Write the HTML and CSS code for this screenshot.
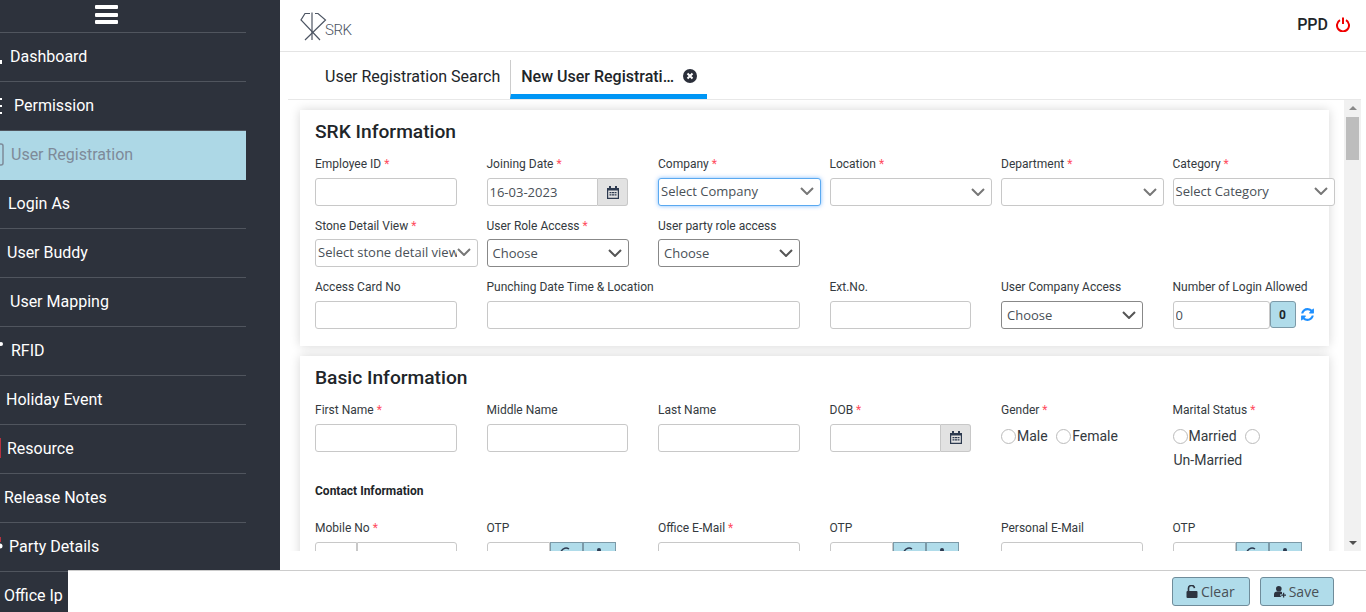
FILE: index.html

```html
<!DOCTYPE html>
<html lang="en">
<head>
    <meta charset="UTF-8">
    <title>SRK - New User Registration</title>
    <link rel="stylesheet" href="styles.css">
</head>
<body>

<div class="app">
    <!-- Side menu, scrolled a little to the left as in the app -->
    <aside class="sidebar">
        <div class="menu-toggle"><span></span><span></span><span></span></div>
        <ul class="menu">
            <li><svg class="menu-icon" width="10" height="48"><rect x="0" y="27" width="2" height="4" fill="#fff"/></svg>Dashboard</li>
            <li><svg class="menu-icon" width="14" height="48"><rect x="0" y="16" width="2" height="2" fill="#fff"/><rect x="0" y="23" width="2" height="2" fill="#fff"/><rect x="0" y="30" width="2" height="2" fill="#fff"/></svg>Permission</li>
            <li class="active"><svg class="menu-icon" width="11" height="48"><rect x="-4" y="13" width="7" height="21" rx="2" fill="none" stroke="#7e8a99" stroke-width="1.5"/></svg>User Registration</li>
            <li><svg class="menu-icon" width="8" height="48"></svg>Login As</li>
            <li><svg class="menu-icon" width="7" height="48"></svg>User Buddy</li>
            <li><svg class="menu-icon" width="10" height="48"></svg>User Mapping</li>
            <li><svg class="menu-icon" width="11" height="48"><circle cx="1" cy="17" r="2" fill="#fff"/></svg>RFID</li>
            <li><svg class="menu-icon" width="6" height="48"></svg>Holiday Event</li>
            <li><svg class="menu-icon" width="7" height="48"><rect x="0" y="13" width="1" height="20" fill="#b5303f"/></svg>Resource</li>
            <li><svg class="menu-icon" width="4" height="48"></svg>Release Notes</li>
            <li><svg class="menu-icon" width="9" height="48"><rect x="0" y="14" width="1" height="5" fill="#b5303f"/><circle cx="0" cy="23" r="2.5" fill="#fff"/></svg>Party Details</li>
            <li><svg class="menu-icon" width="4" height="48"></svg>Office Ip</li>
        </ul>
    </aside>

    <div class="main">
        <header class="topbar">
            <svg class="logo-mark" width="27" height="29" viewBox="0 0 27 29" fill="none" stroke="#4d5563" stroke-width="1.2">
                <path d="M10 1.5H5L1 8L20 28"/>
                <path d="M15 1.5H18L25.5 8L5 28"/>
                <path d="M12 0.5V28"/>
            </svg>
            <span class="logo-text">SRK</span>
            <div class="user-box">
                <span>PPD</span>
                <svg width="14" height="15" viewBox="0 0 14 15" fill="none" stroke="#f00000" stroke-width="2">
                    <path d="M4 3.2A6 6 0 1 0 10 3.2"/>
                    <path d="M7 0.5V7"/>
                </svg>
            </div>
        </header>

        <nav class="tabs">
            <div class="tab">User Registration Search</div>
            <div class="tab tab-active">
                <span class="tab-title">New User Registration</span>
                <svg width="14" height="14" viewBox="0 0 14 14">
                    <circle cx="7" cy="7" r="7" fill="#2b2f3a"/>
                    <path d="M4.5 4.5L9.5 9.5M9.5 4.5L4.5 9.5" stroke="#fff" stroke-width="2"/>
                </svg>
            </div>
        </nav>

        <div class="scroll-area">
            <div class="content">
                <!-- SRK Information -->
                <section class="card card-first">
                    <h2>SRK Information</h2>
                    <div class="form-grid">
                        <div class="field">
                            <label>Employee ID <em>*</em></label>
                            <input type="text" class="input">
                        </div>
                        <div class="field">
                            <label>Joining Date <em>*</em></label>
                            <div class="date-group">
                                <input type="text" class="input input-tight" value="16-03-2023">
                                <span class="date-btn">
                                    <svg width="12" height="13" viewBox="0 0 12 13"><path fill="#2d3a50" d="M2 0h2v2H8V0h2v2h2v11H0V2h2zM1.2 4.5v7.3h9.6V4.5zM2.5 6h2v1.3h-2zM5 6h2v1.3H5zM7.5 6h2v1.3h-2zM2.5 8.3h2v1.3h-2zM5 8.3h2v1.3H5zM7.5 8.3h2v1.3h-2z"/></svg>
                                </span>
                            </div>
                        </div>
                        <div class="field">
                            <label>Company <em>*</em></label>
                            <div class="select select-wide select-tight select-focus"><span>Select Company</span><svg width="14" height="8" viewBox="0 0 14 8"><path d="M1 1L7 7L13 1" fill="none" stroke="#777" stroke-width="2"/></svg></div>
                        </div>
                        <div class="field">
                            <label>Location <em>*</em></label>
                            <div class="select select-wide"><span></span><svg width="14" height="8" viewBox="0 0 14 8"><path d="M1 1L7 7L13 1" fill="none" stroke="#777" stroke-width="2"/></svg></div>
                        </div>
                        <div class="field">
                            <label>Department <em>*</em></label>
                            <div class="select select-wide"><span></span><svg width="14" height="8" viewBox="0 0 14 8"><path d="M1 1L7 7L13 1" fill="none" stroke="#777" stroke-width="2"/></svg></div>
                        </div>
                        <div class="field">
                            <label>Category <em>*</em></label>
                            <div class="select select-wide select-tight"><span>Select Category</span><svg width="14" height="8" viewBox="0 0 14 8"><path d="M1 1L7 7L13 1" fill="none" stroke="#777" stroke-width="2"/></svg></div>
                        </div>

                        <div class="field">
                            <label>Stone Detail View <em>*</em></label>
                            <div class="select select-wide select-tight select-clip"><span>Select stone detail view</span><svg width="14" height="8" viewBox="0 0 14 8"><path d="M1 1L7 7L13 1" fill="none" stroke="#777" stroke-width="2"/></svg></div>
                        </div>
                        <div class="field">
                            <label>User Role Access <em>*</em></label>
                            <div class="select select-dark"><span>Choose</span><svg width="14" height="8" viewBox="0 0 14 8"><path d="M1 1L7 7L13 1" fill="none" stroke="#555" stroke-width="2"/></svg></div>
                        </div>
                        <div class="field field-end">
                            <label>User party role access</label>
                            <div class="select select-dark"><span>Choose</span><svg width="14" height="8" viewBox="0 0 14 8"><path d="M1 1L7 7L13 1" fill="none" stroke="#555" stroke-width="2"/></svg></div>
                        </div>

                        <div class="field">
                            <label>Access Card No</label>
                            <input type="text" class="input">
                        </div>
                        <div class="field field-span2">
                            <label>Punching Date Time &amp; Location</label>
                            <input type="text" class="input">
                        </div>
                        <div class="field">
                            <label>Ext.No.</label>
                            <input type="text" class="input">
                        </div>
                        <div class="field">
                            <label>User Company Access</label>
                            <div class="select select-dark"><span>Choose</span><svg width="14" height="8" viewBox="0 0 14 8"><path d="M1 1L7 7L13 1" fill="none" stroke="#555" stroke-width="2"/></svg></div>
                        </div>
                        <div class="field">
                            <label>Number of Login Allowed</label>
                            <div class="login-group">
                                <input type="text" class="input input-tight" value="0">
                                <span class="count-btn">0</span>
                                <svg class="sync" width="15" height="15" viewBox="0 0 1792 1792"><path fill="#1e90ff" d="M1639 1056q0 5-1 7-64 268-268 434.5t-478 166.5q-146 0-282.5-55t-243.5-157l-129 129q-19 19-45 19t-45-19-19-45v-448q0-26 19-45t45-19h448q26 0 45 19t19 45-19 45l-137 137q71 66 161 102t187 36q134 0 250-65t186-179q11-17 53-117 8-23 30-23h192q13 0 22.5 9.5t9.5 22.5zm25-800v448q0 26-19 45t-45 19h-448q-26 0-45-19t-19-45 19-45l138-138q-148-137-349-137-134 0-250 65t-186 179q-11 17-53 117-8 23-30 23h-199q-13 0-22.5-9.5t-9.5-22.5v-7q65-268 270-434.5t480-166.5q146 0 284 55.5t245 156.5l130-129q19-19 45-19t45 19 19 45z"/></svg>
                            </div>
                        </div>
                    </div>
                </section>

                <!-- Basic Information -->
                <section class="card">
                    <h2>Basic Information</h2>
                    <div class="form-grid form-grid-basic">
                        <div class="field">
                            <label>First Name <em>*</em></label>
                            <input type="text" class="input">
                        </div>
                        <div class="field">
                            <label>Middle Name</label>
                            <input type="text" class="input">
                        </div>
                        <div class="field">
                            <label>Last Name</label>
                            <input type="text" class="input">
                        </div>
                        <div class="field">
                            <label>DOB <em>*</em></label>
                            <div class="date-group">
                                <input type="text" class="input input-tight">
                                <span class="date-btn">
                                    <svg width="12" height="13" viewBox="0 0 12 13"><path fill="#2d3a50" d="M2 0h2v2H8V0h2v2h2v11H0V2h2zM1.2 4.5v7.3h9.6V4.5zM2.5 6h2v1.3h-2zM5 6h2v1.3H5zM7.5 6h2v1.3h-2zM2.5 8.3h2v1.3h-2zM5 8.3h2v1.3H5zM7.5 8.3h2v1.3h-2z"/></svg>
                                </span>
                            </div>
                        </div>
                        <div class="field">
                            <label>Gender <em>*</em></label>
                            <div class="radios">
                                <input type="radio" name="gender">Male <input type="radio" name="gender">Female
                            </div>
                        </div>
                        <div class="field">
                            <label>Marital Status <em>*</em></label>
                            <div class="radios">
                                <input type="radio" name="marital">Married <input type="radio" name="marital"> <span class="radio-wrap">Un-Married</span>
                            </div>
                        </div>
                    </div>

                    <h4>Contact Information</h4>

                    <div class="form-grid">
                        <div class="field">
                            <label>Mobile No <em>*</em></label>
                            <div class="mobile-group">
                                <input type="text" class="input">
                                <input type="text" class="input">
                            </div>
                        </div>
                        <div class="field">
                            <label>OTP</label>
                            <div class="otp-group">
                                <input type="text" class="input">
                                <span class="otp-btn"><svg width="14" height="14" viewBox="0 0 14 14"><path d="M12 7A5 5 0 1 1 10 3" fill="none" stroke="#2d3a50" stroke-width="1.5"/></svg></span>
                                <span class="otp-btn"><svg width="14" height="14" viewBox="0 0 14 14"><circle cx="7" cy="4" r="2" fill="#2d3a50"/></svg></span>
                            </div>
                        </div>
                        <div class="field">
                            <label>Office E-Mail <em>*</em></label>
                            <input type="text" class="input">
                        </div>
                        <div class="field">
                            <label>OTP</label>
                            <div class="otp-group">
                                <input type="text" class="input">
                                <span class="otp-btn"><svg width="14" height="14" viewBox="0 0 14 14"><path d="M12 7A5 5 0 1 1 10 3" fill="none" stroke="#2d3a50" stroke-width="1.5"/></svg></span>
                                <span class="otp-btn"><svg width="14" height="14" viewBox="0 0 14 14"><circle cx="7" cy="4" r="2" fill="#2d3a50"/></svg></span>
                            </div>
                        </div>
                        <div class="field">
                            <label>Personal E-Mail</label>
                            <input type="text" class="input">
                        </div>
                        <div class="field">
                            <label>OTP</label>
                            <div class="otp-group">
                                <input type="text" class="input">
                                <span class="otp-btn"><svg width="14" height="14" viewBox="0 0 14 14"><path d="M12 7A5 5 0 1 1 10 3" fill="none" stroke="#2d3a50" stroke-width="1.5"/></svg></span>
                                <span class="otp-btn"><svg width="14" height="14" viewBox="0 0 14 14"><circle cx="7" cy="4" r="2" fill="#2d3a50"/></svg></span>
                            </div>
                        </div>
                    </div>
                </section>
            </div>

            <div class="scrollbar">
                <span class="arrow-up"></span>
                <span class="thumb"></span>
                <span class="arrow-down"></span>
            </div>
        </div>
    </div>

    <!-- Action bar lies over the bottom of the side menu -->
    <footer class="actions">
        <button type="button" class="btn">
            <svg width="12" height="13" viewBox="0 0 12 13"><path d="M2.5 6V3.8a3 3 0 0 1 6-.6" fill="none" stroke="#2d3440" stroke-width="1.6"/><rect x="0.5" y="6" width="11" height="7" rx="1" fill="#2d3440"/></svg>
            Clear
        </button>
        <button type="button" class="btn">
            <svg width="12" height="13" viewBox="0 0 15 14"><circle cx="6" cy="3.5" r="3.5" fill="#2d3440"/><path d="M0 14V11a4 4 0 0 1 4-4h4a4 4 0 0 1 2 .6V10H8v3h1v1z" fill="#2d3440"/><path d="M9 11.5h6M12 8.5v6" stroke="#2d3440" stroke-width="1.6"/></svg>
            Save
        </button>
    </footer>
</div>

</body>
</html>
```

FILE: styles.css

```css
* {
    box-sizing: border-box;
}

body {
    margin: 0;
    font-family: Roboto, "Liberation Sans", sans-serif;
    background-color: #ffffff;
    color: #212529;
}

.app {
    position: relative;
    display: flex;
    width: 100%;
    height: 612px;
    overflow: hidden;
}

/* Side menu */
.sidebar {
    flex: 0 0 280px;
    height: 612px;
    background-color: #2d323c;
    overflow: hidden;
}

.menu-toggle {
    width: 246px;
    height: 33px;
    padding: 5px 0 0 95px;
    border-bottom: 1px solid #50555e;
}

.menu-toggle span {
    display: block;
    width: 23px;
    height: 4px;
    margin-bottom: 3.5px;
    background-color: #ffffff;
    border-radius: 1px;
}

.menu {
    list-style: none;
    margin: 0;
    padding: 0;
    width: 246px;
}

.menu li {
    display: flex;
    align-items: center;
    height: 49px;
    padding-bottom: 2px;
    border-bottom: 1px solid #50555e;
    color: #ffffff;
    font-size: 16px;
}

.menu li.active {
    background-color: #add8e6;
    color: #7e8a99;
    border-bottom-color: #add8e6;
}

.menu-icon {
    flex: none;
    align-self: flex-start;
}

/* Main column */
.main {
    flex: 1;
    display: flex;
    flex-direction: column;
    height: 570px;
    min-width: 0;
}

.topbar {
    display: flex;
    align-items: center;
    flex: none;
    height: 52px;
    padding: 0 16px 0 20px;
    border-bottom: 1px solid #e4e4e4;
}

.logo-mark {
    margin-top: 1px;
}

.logo-text {
    align-self: flex-end;
    margin: 0 0 12px -2px;
    font-size: 15px;
    font-weight: 300;
    letter-spacing: -0.4px;
    color: #4d5563;
}

.user-box {
    display: flex;
    align-items: center;
    gap: 8px;
    margin: 0 0 2px auto;
    font-size: 16px;
    font-weight: 500;
}

.tabs {
    display: flex;
    flex: none;
    height: 48px;
    margin: 0 5px 0 8px;
    padding: 8px 0 0 27px;
    border-bottom: 1px solid #e8e8e8;
    font-size: 16px;
}

.tab {
    display: flex;
    align-items: center;
    padding: 0 10px 7px;
}

.tab-active {
    gap: 8px;
    width: 197px;
    border-left: 1px solid #cccccc;
    border-bottom: 5px solid #0096f5;
    padding-bottom: 2px;
    font-weight: 500;
}

.tab-title {
    width: 154px;
    white-space: nowrap;
    overflow: hidden;
    text-overflow: ellipsis;
}

.tab-active svg {
    flex: none;
}

.scroll-area {
    display: flex;
    height: 451px;
    margin: 0 5px 0 8px;
    overflow: hidden;
}

.content {
    flex: 1;
    padding: 10px 15px 0 12px;
    overflow: hidden;
}

.card {
    background-color: #ffffff;
    box-shadow: 0 0 10px rgba(0, 0, 0, 0.16);
    margin-bottom: 10px;
}

.card-first {
    padding-bottom: 5.8px;
}

.card h2 {
    margin: 0;
    height: 46px;
    padding: 10px 15px 0;
    font-size: 19.2px;
    font-weight: 500;
    line-height: 24px;
}

.card h4 {
    margin: 0;
    height: 40px;
    padding: 0 15px;
    font-size: 12px;
    font-weight: 700;
    line-height: 22px;
}

.form-grid {
    display: grid;
    grid-template-columns: repeat(6, 1fr);
    grid-auto-rows: 61.4px;
}

.form-grid-basic {
    grid-auto-rows: 78px;
}

.field {
    padding: 0 15px;
    min-width: 0;
}

.field-end {
    grid-column: 3 / 7;
}

.field-span2 {
    grid-column: span 2;
}

.field label {
    display: block;
    height: 22px;
    padding-top: 1.4px;
    font-size: 12px;
    line-height: 14px;
    color: #343a40;
}

.field label em {
    color: #ff4d5e;
    font-style: normal;
}

.input {
    display: block;
    width: 100%;
    height: 28px;
    padding: 0 6px;
    border: 1px solid #c8c8c8;
    border-radius: 3px;
    background-color: #ffffff;
    font-family: "Open Sans", sans-serif;
    font-size: 13px;
    color: #495057;
    outline: none;
}

.input-tight {
    padding: 0 2px;
}

.date-group {
    display: flex;
    width: 141.5px;
}

.date-group .input {
    border-radius: 3px 0 0 3px;
}

.date-btn {
    display: flex;
    flex: none;
    align-items: center;
    justify-content: center;
    width: 30px;
    height: 28px;
    background-color: #e2e2e2;
    border: 1px solid #c8c8c8;
    border-left: none;
    border-radius: 0 3px 3px 0;
}

.select {
    display: flex;
    align-items: center;
    justify-content: space-between;
    width: 142px;
    height: 28px;
    padding: 0 6px 0 5px;
    border: 1px solid #c8c8c8;
    border-radius: 3px;
    background-color: #ffffff;
    font-family: "Open Sans", sans-serif;
    font-size: 13px;
    color: #495057;
}

.select svg {
    flex: none;
}

.select-wide {
    width: 162.5px;
}

.select-tight {
    padding: 0 6px 2px 2px;
}

.select-dark {
    border-color: #888888;
}

.select-focus {
    border-color: #5aa9f0;
    box-shadow: 0 0 4px rgba(0, 123, 255, 0.5);
}

.select-clip span {
    min-width: 0;
    white-space: nowrap;
    overflow: hidden;
}

.login-group {
    display: flex;
    align-items: center;
}

.login-group .input {
    width: 97px;
    flex: none;
}

.count-btn {
    display: flex;
    flex: none;
    align-items: center;
    justify-content: center;
    width: 26px;
    height: 27px;
    background-color: #b0dcea;
    border: 1px solid #7c9aa8;
    border-radius: 3px;
    font-size: 12px;
    font-weight: 700;
}

.sync {
    flex: none;
    margin-left: 4px;
}

.radios {
    font-size: 14px;
    line-height: 24px;
    color: #343a40;
}

.radios input {
    appearance: none;
    width: 15px;
    height: 15px;
    margin: 0 1px 0 0;
    border: 1px solid #bbbbbb;
    border-radius: 50%;
    vertical-align: -3px;
}

.radios input + input {
    margin-left: 5px;
}

.radio-wrap {
    display: inline-block;
    margin-left: 1px;
    white-space: nowrap;
}

.mobile-group {
    display: flex;
}

.mobile-group .input:first-child {
    flex: 0 0 42px;
    border-radius: 3px 0 0 3px;
}

.mobile-group .input:last-child {
    flex: 1;
    min-width: 0;
    border-radius: 0 3px 3px 0;
}

.otp-group {
    display: flex;
    width: 129px;
}

.otp-group .input {
    flex: 0 0 63px;
    border-radius: 3px 0 0 3px;
}

.otp-btn {
    display: flex;
    flex: 0 0 33px;
    justify-content: center;
    height: 28px;
    padding-top: 3px;
    background-color: #b0dcea;
    border: 1px solid #7c9aa8;
}

/* Fake scrollbar at the right of the form */
.scrollbar {
    display: flex;
    flex: 0 0 17px;
    flex-direction: column;
    align-items: center;
    height: 451px;
    background-color: #f1f1f1;
}

.arrow-up {
    margin-top: 6px;
    border-left: 4px solid transparent;
    border-right: 4px solid transparent;
    border-bottom: 4px solid #8a8a8a;
}

.thumb {
    width: 13px;
    height: 43px;
    margin-top: 7px;
    background-color: #bdbdbd;
}

.arrow-down {
    margin-top: auto;
    margin-bottom: 6px;
    border-left: 4px solid transparent;
    border-right: 4px solid transparent;
    border-top: 4px solid #505050;
}

/* Bottom action bar */
.actions {
    position: absolute;
    left: 68px;
    right: 0;
    bottom: 0;
    display: flex;
    align-items: center;
    justify-content: flex-end;
    gap: 10px;
    height: 42px;
    padding: 0 32px 0 0;
    background-color: #ffffff;
    border-top: 1px solid #cccccc;
}

.btn {
    display: flex;
    align-items: center;
    gap: 3px;
    height: 29px;
    padding: 0 14px 0 13px;
    background-color: #b0dcea;
    border: 1px solid #6f8c9a;
    border-radius: 3px;
    font-family: "Open Sans", sans-serif;
    font-size: 14px;
    color: #495057;
}
```
